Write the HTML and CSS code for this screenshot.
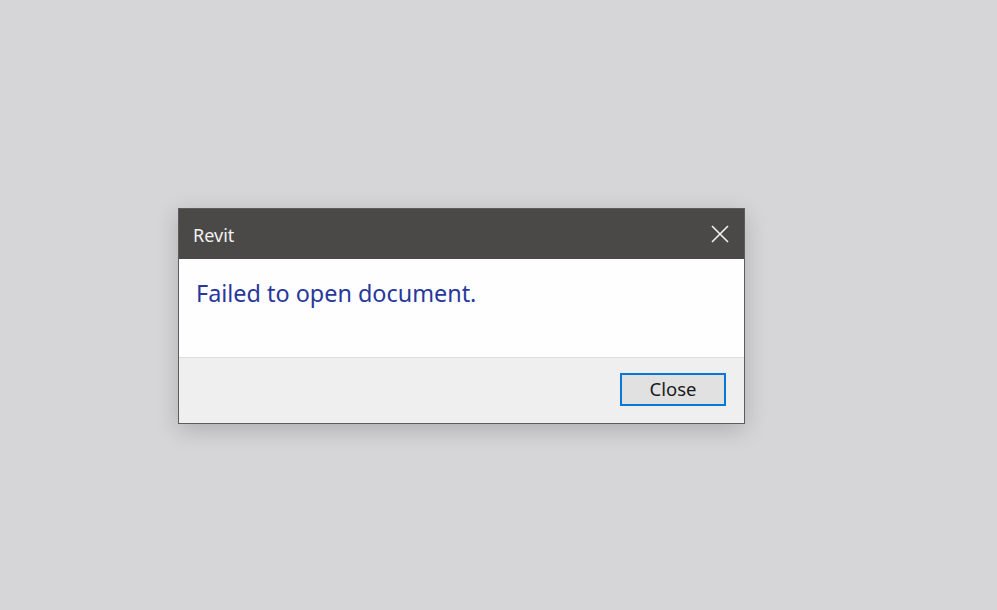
FILE: index.html
```html
<!DOCTYPE html>
<html>
<head>
<meta charset="utf-8">
<link rel="stylesheet" href="styles.css">
</head>
<body>
<div class="dialog">
  <div class="titlebar">
    <span class="title">Revit</span>
    <svg class="close-x" width="18" height="18" viewBox="0 0 18 18"><path d="M1 1 L17 17 M17 1 L1 17" stroke="#f2f2f2" stroke-width="1.6" fill="none"/></svg>
  </div>
  <div class="content">
    <div class="message">Failed to open document.</div>
  </div>
  <div class="footer">
    <button class="btn">Close</button>
  </div>
</div>
</body>
</html>
```
FILE: styles.css
```css
html, body {
  margin: 0;
  padding: 0;
}
body {
  background: #d6d5d7;
  width: 997px;
  height: 610px;
  overflow: hidden;
  padding: 208px 0 0 178px;
  box-sizing: border-box;
  font-family: "Noto Sans", "Open Sans", sans-serif;
}
.dialog {
  width: 567px;
  border: 1px solid #5c5c5c;
  box-sizing: border-box;
  box-shadow: 0 6px 22px rgba(0,0,0,0.18);
  background: #fefdff;
}
.titlebar {
  height: 50px;
  background: #4b4948;
  display: flex;
  align-items: center;
  justify-content: space-between;
  padding: 0 15px 0 14px;
  box-sizing: border-box;
}
.title {
  color: #f4f2f0;
  font-size: 18px;
  padding-top: 1px;
}
.close-x {
  display: block;
  margin-top: -1px;
}
.content {
  height: 98px;
  padding: 18px 0 0 17px;
  box-sizing: border-box;
  background: #fefdff;
}
.message {
  color: #27389a;
  font-size: 23.4px;
  line-height: 32px;
}
.footer {
  border-top: 1px solid #dedede;
  height: 66px;
  background: #efeff0;
  display: flex;
  justify-content: flex-end;
  align-items: flex-start;
  padding: 15px 18px 0 0;
  box-sizing: border-box;
}
.btn {
  width: 106px;
  height: 33px;
  border: 2px solid #0a77d8;
  background: #e2e1e2;
  color: #1a1a1a;
  font-family: "Noto Sans", "Open Sans", sans-serif;
  font-size: 18.5px;
  line-height: 1;
  padding: 0 0 1px 0;
  margin: 0;
}
```
